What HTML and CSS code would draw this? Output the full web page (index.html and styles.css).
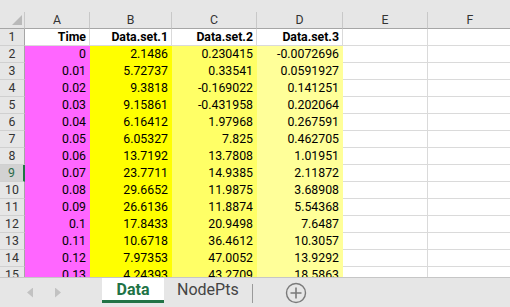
FILE: index.html
```html
<!DOCTYPE html>
<html lang="en">
<head>
  <meta charset="UTF-8">
  <title>Data</title>
  <link rel="stylesheet" href="styles.css">
</head>
<body>
  <div class="sheet">
    <div class="top-strip"></div>
    <div class="grid" id="grid">
      <div class="hdr corner"><div class="select-all"></div></div>
      <div class="hdr col">A</div>
      <div class="hdr col">B</div>
      <div class="hdr col">C</div>
      <div class="hdr col">D</div>
      <div class="hdr col">E</div>
      <div class="hdr col">F</div>
    </div>
  </div>

  <div class="tabbar">
    <div class="nav-arrows">
      <span class="arrow left"></span>
      <span class="arrow right"></span>
    </div>
    <div class="tab active">Data</div>
    <div class="tab">NodePts</div>
    <div class="tab-sep"></div>
    <div class="add-sheet">
      <svg width="22" height="22" viewBox="0 0 22 22">
        <circle cx="11" cy="11" r="9.5" fill="none" stroke="#7a7a7a" stroke-width="1.4"/>
        <path d="M11 5.5v11M5.5 11h11" stroke="#7a7a7a" stroke-width="1.6"/>
      </svg>
    </div>
  </div>

  <script>
    const grid = document.getElementById("grid");

    const rows = [
      ["0", "2.1486", "0.230415", "-0.0072696"],
      ["0.01", "5.72737", "0.33541", "0.0591927"],
      ["0.02", "9.3818", "-0.169022", "0.141251"],
      ["0.03", "9.15861", "-0.431958", "0.202064"],
      ["0.04", "6.16412", "1.97968", "0.267591"],
      ["0.05", "6.05327", "7.825", "0.462705"],
      ["0.06", "13.7192", "13.7808", "1.01951"],
      ["0.07", "23.7711", "14.9385", "2.11872"],
      ["0.08", "29.6652", "11.9875", "3.68908"],
      ["0.09", "26.6136", "11.8874", "5.54368"],
      ["0.1", "17.8433", "20.9498", "7.6487"],
      ["0.11", "10.6718", "36.4612", "10.3057"],
      ["0.12", "7.97353", "47.0052", "13.9292"],
      ["0.13", "4.24393", "43.2709", "18.5863"]
    ];

    function addRow(num, values, fills, bold) {
      const rh = document.createElement("div");
      rh.className = "hdr row" + (num === 9 ? " selected" : "");
      rh.textContent = num;
      grid.appendChild(rh);
      for (let i = 0; i < 6; i++) {
        const c = document.createElement("div");
        c.className = "cell" + (fills && i < 4 ? " fill-" + "abcd"[i] : "") + (bold ? " bold" : "");
        c.textContent = values[i] || "";
        grid.appendChild(c);
      }
    }

    addRow(1, ["Time", "Data.set.1", "Data.set.2", "Data.set.3"], false, true);
    rows.forEach((r, i) => addRow(i + 2, r, true, false));
  </script>
</body>
</html>
```

FILE: styles.css
```css
* {
  box-sizing: border-box;
}

body {
  margin: 0;
  font-family: Roboto, "Liberation Sans", sans-serif;
  font-size: 12.3px;
  color: #000;
  background: #fff;
  overflow: hidden;
  width: 510px;
  height: 307px;
}

.sheet {
  height: 277px;
  overflow: hidden;
}

.top-strip {
  height: 12px;
  background: #e6e6e6;
}

.grid {
  display: grid;
  grid-template-columns: 25px 65px 82px 85px 86px 85px 85px;
  grid-auto-rows: 17px;
}

.hdr {
  background: #e6e6e6;
  color: #333;
  display: flex;
  align-items: center;
  justify-content: center;
  border-right: 1px solid #c8c8c8;
  border-bottom: 1px solid #c8c8c8;
  line-height: 16px;
}

.hdr.col,
.hdr.corner {
  border-bottom-color: #a6a6a6;
}

.hdr.corner {
  justify-content: flex-end;
  align-items: flex-end;
  padding: 0 2px 3px 0;
}

.select-all {
  width: 10px;
  height: 10px;
  background: #b9b9b9;
  clip-path: polygon(100% 0, 100% 100%, 0 100%);
}

.hdr.row {
  border-right-color: #a6a6a6;
  border-bottom-color: #d0d0d0;
}

.hdr.row.selected {
  background: #d2d2d2;
  color: #2b6a4a;
  border-right: 2px solid #217346;
}

.cell {
  border-right: 1px solid #dadada;
  border-bottom: 1px solid #dadada;
  text-align: right;
  padding-right: 3px;
  line-height: 16px;
  white-space: nowrap;
  overflow: hidden;
}

.cell.bold {
  font-weight: bold;
}

.fill-a {
  background: #ff66ff;
  border-color: #ff66ff;
}

.fill-b {
  background: #ffff00;
  border-color: #ffff00;
}

.fill-c {
  background: #ffff66;
  border-color: #ffff66;
}

.fill-d {
  background: #ffff99;
  border-color: #ffff99;
}

.tabbar {
  height: 30px;
  background: #e6e6e6;
  border-top: 1px solid #c6c6c6;
  display: flex;
  align-items: flex-start;
}

.nav-arrows {
  width: 102px;
  height: 29px;
  display: flex;
  align-items: center;
  gap: 22px;
  padding-left: 27px;
}

.arrow {
  width: 6px;
  height: 10px;
  background: #c2c2c2;
}

.arrow.left {
  clip-path: polygon(100% 0, 100% 100%, 0 50%);
}

.arrow.right {
  clip-path: polygon(0 0, 100% 50%, 0 100%);
}

.tab {
  height: 25px;
  padding: 0 13px;
  font-size: 16px;
  line-height: 23px;
  color: #444;
}

.tab.active {
  width: 62px;
  padding: 0;
  text-align: center;
  background: #fff;
  color: #217346;
  font-weight: bold;
  border-bottom: 3px solid #217346;
}

.tab-sep {
  width: 1px;
  height: 19px;
  margin-top: 6px;
  background: #9a9a9a;
}

.add-sheet {
  height: 29px;
  display: flex;
  align-items: center;
  padding-left: 32px;
}
```
